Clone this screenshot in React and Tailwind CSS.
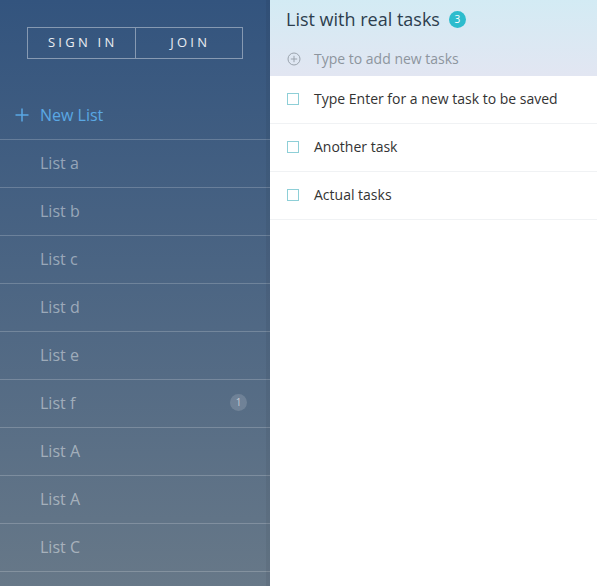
import React from "react";

const lists = [
  { name: "List a" },
  { name: "List b" },
  { name: "List c" },
  { name: "List d" },
  { name: "List e" },
  { name: "List f", count: 1 },
  { name: "List A" },
  { name: "List A" },
  { name: "List C" },
];

const tasks = ["Type Enter for a new task to be saved", "Another task", "Actual tasks"];

export default function App() {
  return (
    <div
      className="flex w-[597px] h-[586px] overflow-hidden bg-white"
      style={{ fontFamily: '"Open Sans", "Noto Sans", sans-serif' }}
    >
      <aside className="relative w-[270px] shrink-0 h-full overflow-hidden bg-gradient-to-b from-[#33547e] to-[#677888]">
        <div className="absolute right-0 top-0 bottom-0 w-[4px] bg-black/5" />
        <div className="flex justify-center pt-[27px]">
          <div className="flex w-[216px] h-[32px] border border-white/40">
            <button className="flex-1 border-r border-white/40 text-[13px] tracking-[0.25em] text-white/90 pl-[3px]">
              SIGN IN
            </button>
            <button className="flex-1 text-[13px] tracking-[0.25em] text-white/90 pl-[3px]">
              JOIN
            </button>
          </div>
        </div>
        <div className="mt-[33px]">
          <div className="flex items-center h-[48px] pl-[14px] pb-[2px] border-b border-white/20">
            <svg width="16" height="16" viewBox="0 0 16 16" className="mr-[10px]">
              <path d="M8 1.5v13M1.5 8h13" stroke="#5aa8e4" strokeWidth="1.5" />
            </svg>
            <span className="text-[16px] text-[#5aa8e4]">New List</span>
          </div>
          {lists.map((l, i) => (
            <div
              key={i}
              className="flex items-center justify-between h-[48px] pl-[40px] pr-[23px] pb-[2px] border-b border-white/20"
            >
              <span className="text-[16px] text-white/45">{l.name}</span>
              {l.count ? (
                <span className="flex items-center justify-center w-[17px] h-[17px] rounded-full bg-white/15 text-[10px] text-white/60">
                  {l.count}
                </span>
              ) : null}
            </div>
          ))}
        </div>
      </aside>
      <main className="flex-1 h-full flex flex-col">
        <div className="h-[76px] bg-gradient-to-b from-[#d3ebf4] to-[#e2e6f2] px-[16px]">
          <div className="flex items-center h-[39px] pb-[1px]">
            <h1 className="text-[18px] text-[#2d3e4e] leading-none">List with real tasks</h1>
            <span className="ml-[9px] flex items-center justify-center w-[17px] h-[17px] rounded-full bg-[#2dbccd] text-[10px] text-white">
              3
            </span>
          </div>
          <div className="flex items-center h-[37px] pb-[1px] pt-[3px]">
            <svg width="14" height="14" viewBox="0 0 14 14" className="ml-[1px] mr-[13px]">
              <circle cx="7" cy="7" r="6" fill="none" stroke="#9aa3ad" strokeWidth="1" />
              <path d="M7 3.8v6.4M3.8 7h6.4" stroke="#9aa3ad" strokeWidth="1" />
            </svg>
            <span className="text-[14px] text-[#8d959e]">Type to add new tasks</span>
          </div>
        </div>
        <div>
          {tasks.map((t, i) => (
            <div key={i} className="flex items-center h-[48px] pl-[17px] pb-[2px] border-b border-[#f0f2f4]">
              <span className="w-[12px] h-[12px] border border-[#8ecfd7] mr-[15px]" />
              <span className="text-[14px] text-[#333]">{t}</span>
            </div>
          ))}
        </div>
      </main>
    </div>
  );
}
